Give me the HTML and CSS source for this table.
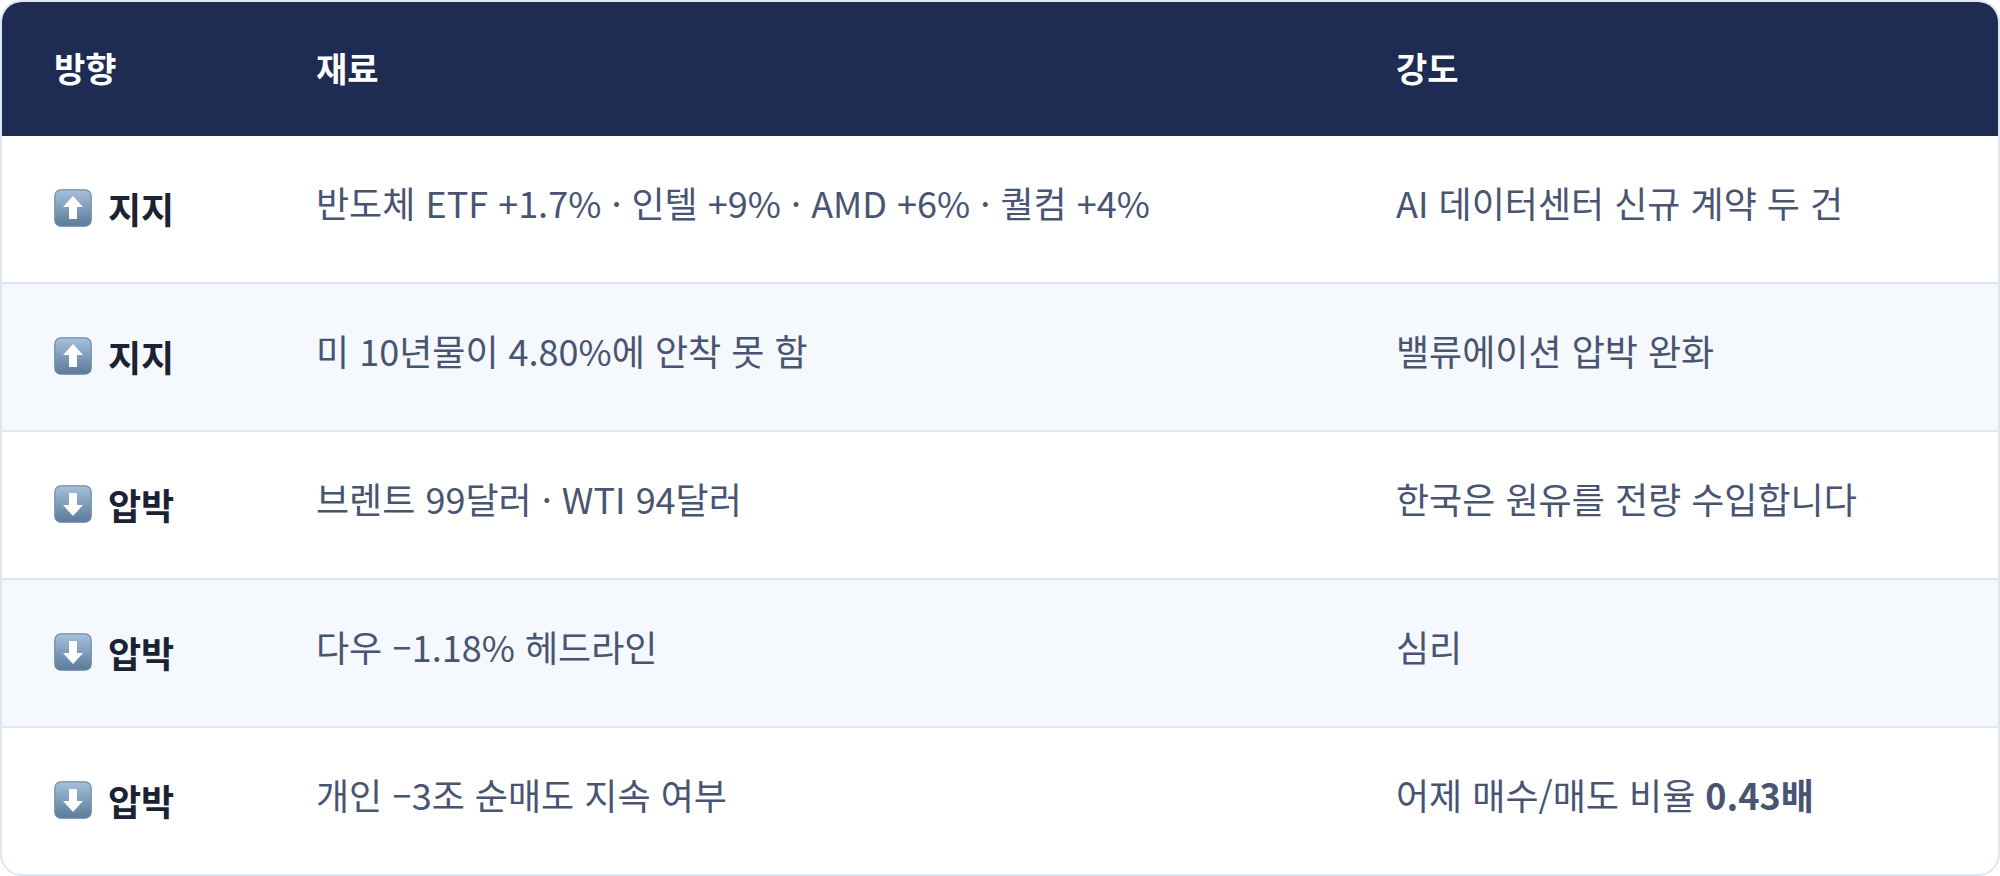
FILE: index.html
```html
<!DOCTYPE html>
<html lang="ko">
<head>
<meta charset="utf-8">
<title>재료 표</title>
<link rel="stylesheet" href="styles.css">
</head>
<body>
<div class="card">
  <table class="tbl">
    <colgroup>
      <col class="c1"><col class="c2"><col class="c3">
    </colgroup>
    <thead>
      <tr><th>방향</th><th>재료</th><th>강도</th></tr>
    </thead>
    <tbody>
      <tr>
        <td class="dir"><span class="dirwrap"><svg class="emo" viewBox="0 0 38 38"><defs><linearGradient id="g1" x1="0" y1="0" x2="0" y2="1"><stop offset="0" stop-color="#a7c1dc"/><stop offset="1" stop-color="#5b7999"/></linearGradient></defs><rect x="0.8" y="0.8" width="36.4" height="36.4" rx="6" fill="url(#g1)" stroke="#6e8aa8" stroke-width="1.2"/><path d="M19 7 L29 18 L23 18 L23 30 L15 30 L15 18 L9 18 Z" fill="#fff"/></svg><b>지지</b></span></td>
        <td>반도체 ETF +1.7% · 인텔 +9% · AMD +6% · 퀄컴 +4%</td>
        <td>AI 데이터센터 신규 계약 두 건</td>
      </tr>
      <tr class="alt">
        <td class="dir"><span class="dirwrap"><svg class="emo" viewBox="0 0 38 38"><rect x="0.8" y="0.8" width="36.4" height="36.4" rx="6" fill="url(#g1)" stroke="#6e8aa8" stroke-width="1.2"/><path d="M19 7 L29 18 L23 18 L23 30 L15 30 L15 18 L9 18 Z" fill="#fff"/></svg><b>지지</b></span></td>
        <td>미 10년물이 4.80%에 안착 못 함</td>
        <td>밸류에이션 압박 완화</td>
      </tr>
      <tr>
        <td class="dir"><span class="dirwrap"><svg class="emo" viewBox="0 0 38 38"><rect x="0.8" y="0.8" width="36.4" height="36.4" rx="6" fill="url(#g1)" stroke="#6e8aa8" stroke-width="1.2"/><path d="M19 31 L29 20 L23 20 L23 8 L15 8 L15 20 L9 20 Z" fill="#fff"/></svg><b>압박</b></span></td>
        <td>브렌트 99달러 · WTI 94달러</td>
        <td>한국은 원유를 전량 수입합니다</td>
      </tr>
      <tr class="alt">
        <td class="dir"><span class="dirwrap"><svg class="emo" viewBox="0 0 38 38"><rect x="0.8" y="0.8" width="36.4" height="36.4" rx="6" fill="url(#g1)" stroke="#6e8aa8" stroke-width="1.2"/><path d="M19 31 L29 20 L23 20 L23 8 L15 8 L15 20 L9 20 Z" fill="#fff"/></svg><b>압박</b></span></td>
        <td>다우 –1.18% 헤드라인</td>
        <td>심리</td>
      </tr>
      <tr>
        <td class="dir"><span class="dirwrap"><svg class="emo" viewBox="0 0 38 38"><rect x="0.8" y="0.8" width="36.4" height="36.4" rx="6" fill="url(#g1)" stroke="#6e8aa8" stroke-width="1.2"/><path d="M19 31 L29 20 L23 20 L23 8 L15 8 L15 20 L9 20 Z" fill="#fff"/></svg><b>압박</b></span></td>
        <td>개인 –3조 순매도 지속 여부</td>
        <td>어제 매수/매도 비율 <b class="em">0.43배</b></td>
      </tr>
    </tbody>
  </table>
</div>
</body>
</html>
```

FILE: styles.css
```css
html, body {
  margin: 0;
  padding: 0;
  background: #ffffff;
}
body {
  font-family: "Noto Sans CJK KR", "Noto Sans", sans-serif;
}
.card {
  box-sizing: border-box;
  width: 2000px;
  height: 876px;
  border: 2px solid #dfe5f1;
  border-radius: 22px;
  overflow: hidden;
  background: #ffffff;
}
.tbl {
  width: 100%;
  border-collapse: separate;
  border-spacing: 0;
  table-layout: fixed;
}
.c1 { width: 262px; }
.c2 { width: 1080px; }
.c3 { width: auto; }
thead th {
  background: #1e2b53;
  color: #ffffff;
  font-size: 34px;
  font-weight: 700;
  text-align: left;
  height: 134px;
  padding: 0 0 4px 52px;
  box-sizing: border-box;
    vertical-align: middle;
}
tbody td {
  height: 132px;
  padding: 0 0 14px 52px;
  box-sizing: content-box;
  font-size: 36px;
  color: #485472;
  vertical-align: middle;
  border-top: 2px solid #dfe6f2;
}
tbody tr:first-child td {
  border-top: none;
}
tbody tr.alt td {
  background: #f5f8fd;
}
.dir {
  padding-bottom: 0;
}
.dirwrap {
  display: inline-flex;
  align-items: center;
  gap: 16px;
}
.emo {
  width: 38px;
  height: 38px;
  flex: none;
}
.dir b {
  color: #1a2234;
  font-weight: 700;
  font-size: 36px;
}
.em {
  font-weight: 700;
  color: #485472;
}
```
